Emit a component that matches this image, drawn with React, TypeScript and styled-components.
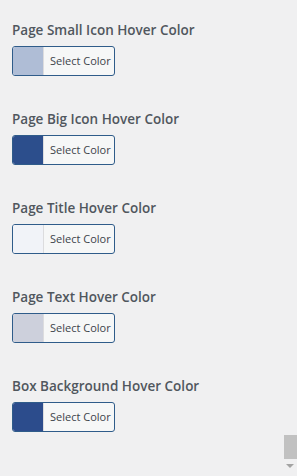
import styled, { createGlobalStyle } from 'styled-components'

const Global = createGlobalStyle`
  html, body {
    margin: 0;
    padding: 0;
    background: #f0f0f1;
    font-family: "Open Sans", "Liberation Sans", sans-serif;
  }
`

const Page = styled.div`
  position: relative;
  width: 297px;
  height: 476px;
  overflow: hidden;
  padding: 20px 0 0 12px;
  box-sizing: border-box;
  display: flex;
  flex-direction: column;
  gap: 33px;
`

const Field = styled.div`
  display: flex;
  flex-direction: column;
  gap: 6px;
`

const Label = styled.div`
  font-size: 13.5px;
  font-weight: 600;
  line-height: 20px;
  color: #50575e;
  white-space: nowrap;
`

const ColorButton = styled.button`
  display: flex;
  align-items: stretch;
  width: 103px;
  height: 30px;
  padding: 0;
  border: 1px solid #2f5c8a;
  border-radius: 3px;
  background: #f6f7f7;
  overflow: hidden;
  cursor: pointer;
`

const Swatch = styled.span<{ $color: string }>`
  width: 30px;
  flex: none;
  background: ${(p) => p.$color};
  border-right: 1px solid #dcdcde;
`

const ButtonText = styled.span`
  flex: 1;
  display: flex;
  align-items: center;
  padding-left: 6px;
  padding-bottom: 1px;
  font-family: "Open Sans", "Liberation Sans", sans-serif;
  font-size: 11px;
  color: #3c434a;
`

const Scrollbar = styled.div`
  position: absolute;
  right: 0;
  top: 0;
  width: 13px;
  height: 476px;
`

const Thumb = styled.div`
  position: absolute;
  right: 0;
  top: 435px;
  width: 13px;
  height: 24px;
  background: #c1c1c1;
`

const Arrow = styled.div`
  position: absolute;
  right: 3px;
  top: 464px;
  width: 0;
  height: 0;
  border-left: 4px solid transparent;
  border-right: 4px solid transparent;
  border-top: 4px solid #a3a3a3;
`

const fields = [
  { label: 'Page Small Icon Hover Color', color: '#afbdd6' },
  { label: 'Page Big Icon Hover Color', color: '#2c4e8c' },
  { label: 'Page Title Hover Color', color: '#f1f3f8' },
  { label: 'Page Text Hover Color', color: '#cdd0dc' },
  { label: 'Box Background Hover Color', color: '#2c4c8c' },
]

export default function App() {
  return (
    <>
      <Global />
      <Page>
        {fields.map((f) => (
          <Field key={f.label}>
            <Label>{f.label}</Label>
            <ColorButton type="button">
              <Swatch $color={f.color} />
              <ButtonText>Select Color</ButtonText>
            </ColorButton>
          </Field>
        ))}
        <Scrollbar>
          <Thumb />
          <Arrow />
        </Scrollbar>
      </Page>
    </>
  )
}
